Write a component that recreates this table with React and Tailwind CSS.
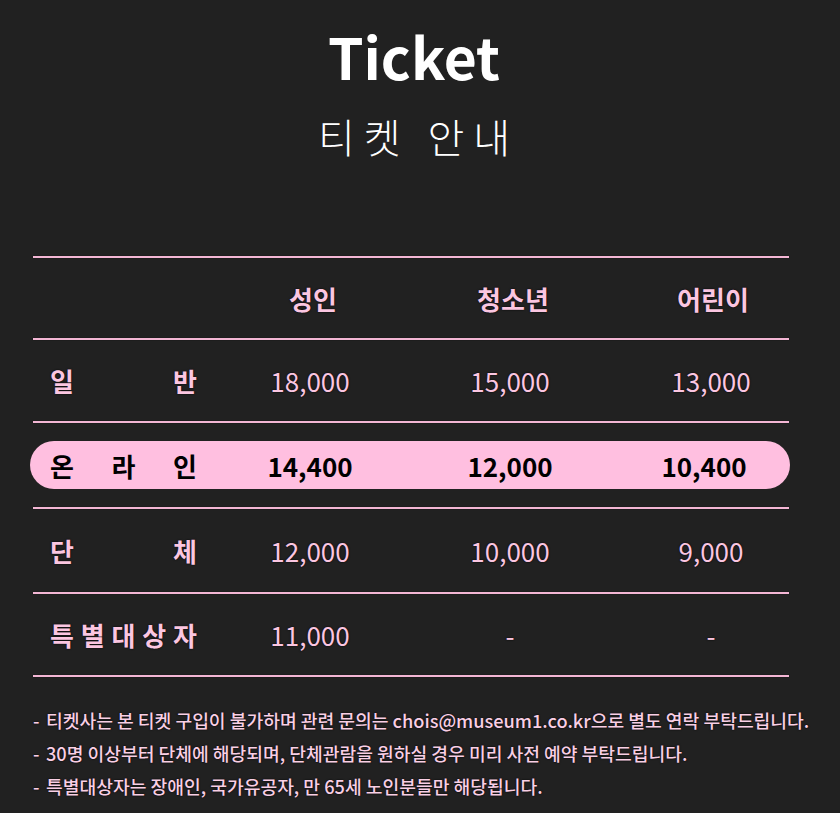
const prices = [
  { label: ['일', '반'], values: ['18,000', '15,000', '13,000'], h: 'h-[81px]' },
  { label: ['온', '라', '인'], values: ['14,400', '12,000', '10,400'], highlight: true, h: 'h-[84px]' },
  { label: ['단', '체'], values: ['12,000', '10,000', '9,000'], h: 'h-[83px]' },
  { label: ['특', '별', '대', '상', '자'], values: ['11,000', '-', '-'], h: 'h-[81px]' },
];

const notes = [
  '티켓사는 본 티켓 구입이 불가하며 관련 문의는 chois@museum1.co.kr으로 별도 연락 부탁드립니다.',
  '30명 이상부터 단체에 해당되며, 단체관람을 원하실 경우 미리 사전 예약 부탁드립니다.',
  '특별대상자는 장애인, 국가유공자, 만 65세 노인분들만 해당됩니다.',
];

const font = { fontFamily: '"Noto Sans CJK KR", "Noto Sans", sans-serif' };

function Line() {
  return <div className="h-[2px] bg-[#f3b6d4] shadow-[0_0_1px_#000]" />;
}

function Row({ row }) {
  const text = row.highlight ? 'text-black' : 'text-[#fbc6e1] [text-shadow:0_0_2px_#000]';
  return (
    <div className={'flex items-center ' + row.h}>
      <div
        className={
          'flex h-[48px] items-center ' +
          (row.highlight ? '-mx-[3px] w-[760px] rounded-full bg-[#ffbfe0] pl-[20px]' : 'w-full pl-[17px]')
        }
      >
        <div className={'flex w-[147px] shrink-0 justify-between text-[26px] font-bold ' + text}>
          {row.label.map((l) => (
            <span key={l}>{l}</span>
          ))}
        </div>
        <div className="w-[13px] shrink-0" />
        {row.values.map((v, i) => (
          <div
            key={i}
            className={
              'w-[200px] shrink-0 text-center text-[26px] ' +
              text +
              (row.highlight ? ' font-bold' : ' font-normal') +
              (row.highlight && i === 2 ? ' pr-[12px]' : '') +
              (!row.highlight && i === 2 ? ' pl-[2px]' : '')
            }
          >
            {v}
          </div>
        ))}
      </div>
    </div>
  );
}

export default function App() {
  return (
    <div className="min-h-[813px] w-full overflow-hidden bg-[#212121]" style={font}>
      <div className="w-[828px] pt-[17px] text-center text-white">
        <h1 className="text-[57px] font-bold leading-[76px]">Ticket</h1>
        <p className="mt-[18px] pl-[9px] text-[40px] font-light leading-[50px] tracking-[9px]">티켓 안내</p>
      </div>

      <div className="ml-[33px] mt-[95px] w-[756px]">
        <Line />
        <div className="flex h-[80px] items-center pl-[17px]">
          <div className="w-[160px] shrink-0" />
          {['성인', '청소년', '어린이'].map((h) => (
            <div key={h} className="w-[200px] shrink-0 pl-[6px] text-center text-[26px] font-bold text-[#fbc6e1] [text-shadow:0_0_2px_#000]">
              {h}
            </div>
          ))}
        </div>
        {prices.map((row, i) => (
          <div key={i}>
            <Line />
            <Row row={row} />
          </div>
        ))}
        <Line />
      </div>

      <ul className="ml-[33px] mt-[31px] flex flex-col gap-[9px] pb-[16px] text-[18.2px] font-medium text-[#f9cfe5] [text-shadow:0_0_2px_#000]">
        {notes.map((n) => (
          <li key={n} className="flex leading-[24px]">
            <span className="w-[13px] shrink-0">-</span>
            <span>{n}</span>
          </li>
        ))}
      </ul>
    </div>
  );
}
